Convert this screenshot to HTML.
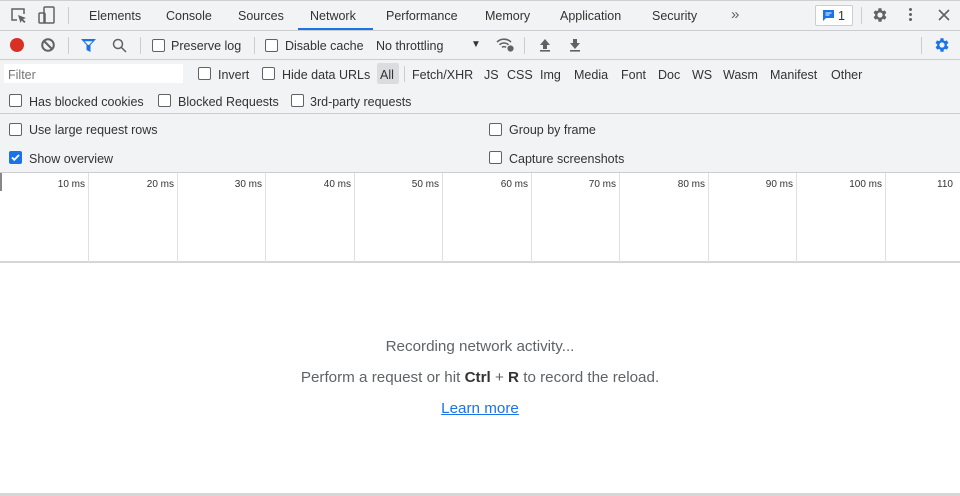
<!DOCTYPE html>
<html><head><style>
*{margin:0;padding:0;box-sizing:border-box}
body{width:960px;height:496px;overflow:hidden;background:#fff;font-family:"Liberation Sans",sans-serif;font-size:12.5px;color:#333;position:relative}
.a{position:absolute;white-space:nowrap}
.bar{position:absolute;left:0;width:960px;background:#f1f3f4}
.hl{position:absolute;left:0;width:960px;height:1px;background:#cbcdd1}
.vs{position:absolute;width:1px;background:#cbcdd1}
.cb{position:absolute;width:13px;height:13px;border:1px solid #5f6368;border-radius:2px;background:#fff}
.g{position:absolute;top:173px;height:89px;width:1px;background:#e0e0e0}
.ms{position:absolute;top:179px;font-size:10px;color:#333;text-align:right;width:60px}
.tx{margin-top:1px}
</style></head><body>
<div class="bar" style="top:0;height:172px"></div>
<div class="hl" style="top:0;background:#d0d0d0"></div>
<div class="hl" style="top:30px"></div>
<div class="hl" style="top:59px"></div>
<div class="hl" style="top:113px"></div>
<div class="hl" style="top:172px"></div>
<div class="hl" style="top:261px;height:2px;background:#d6d6d6"></div>
<div class="hl" style="top:493px;height:3px;background:#d6d6d6"></div>

<svg class="a" style="left:10px;top:7px" width="18" height="18" viewBox="0 0 18 18" fill="none" stroke="#5f6368" stroke-width="1.5"><path d="M7 13H2V2h12v5"/><path d="M8 8l8 3-3 1.2 2.5 2.5-1.3 1.3-2.5-2.5L10.5 16z" fill="#5f6368" stroke="none"/></svg>
<svg class="a" style="left:38px;top:6px" width="18" height="19" viewBox="0 0 18 19" fill="none" stroke="#5f6368" stroke-width="1.5"><rect x="6" y="1" width="10" height="16" rx="1"/><rect x="1" y="7" width="6" height="10" rx="1"/></svg>
<div class="vs" style="left:68px;top:7px;height:17px"></div>
<div class="a" style="left:89px;top:9px">Elements</div>
<div class="a" style="left:166px;top:9px">Console</div>
<div class="a" style="left:238px;top:9px">Sources</div>
<div class="a" style="left:310px;top:9px">Network</div>
<div class="a" style="left:298px;top:28px;width:75px;height:2px;background:#1a73e8"></div>
<div class="a" style="left:386px;top:9px">Performance</div>
<div class="a" style="left:485px;top:9px">Memory</div>
<div class="a" style="left:560px;top:9px">Application</div>
<div class="a" style="left:652px;top:9px">Security</div>
<div class="a" style="left:731px;top:6px;font-size:15px;color:#5f6368">»</div>
<div class="a" style="left:815px;top:5px;width:38px;height:21px;border:1px solid #cbcdd1;border-radius:2px;background:#fff"></div>
<svg class="a" style="left:822px;top:9px" width="13" height="13" viewBox="0 0 13 13"><path d="M1 1h11v8H4l-3 3z" fill="#1a73e8"/><path d="M3.5 4h6M3.5 6h4" stroke="#fff"/></svg>
<div class="a" style="left:838px;top:9px">1</div>
<div class="vs" style="left:861px;top:7px;height:17px"></div>
<svg class="a" style="left:871px;top:6px" width="18" height="18" viewBox="0 0 24 24"><path fill="#5f6368" d="M19.4 13a7.5 7.5 0 000-2l2.1-1.6-2-3.5-2.5 1a7 7 0 00-1.7-1L15 3h-4l-.4 2.9a7 7 0 00-1.7 1l-2.5-1-2 3.5L6.6 11a7.5 7.5 0 000 2l-2.1 1.6 2 3.5 2.5-1a7 7 0 001.7 1L11 21h4l.4-2.9a7 7 0 001.7-1l2.5 1 2-3.5zM13 15.5a3.5 3.5 0 110-7 3.5 3.5 0 010 7z" transform="translate(-1 0)"/></svg>
<div class="a" style="left:909px;top:8px;width:3px;height:3px;border-radius:2px;background:#5f6368;box-shadow:0 5px 0 #5f6368,0 10px 0 #5f6368"></div>
<svg class="a" style="left:938px;top:9px" width="12" height="12" viewBox="0 0 12 12" stroke="#5f6368" stroke-width="1.6"><path d="M1 1l10 10M11 1L1 11"/></svg>

<div class="a" style="left:10px;top:38px;width:14px;height:14px;border-radius:50%;background:#d93025"></div>
<svg class="a" style="left:41px;top:38px" width="14" height="14" viewBox="0 0 14 14" fill="none" stroke="#5f6368" stroke-width="2"><circle cx="7" cy="7" r="5.8"/><path d="M3 3l8 8"/></svg>
<div class="vs" style="left:68px;top:37px;height:17px"></div>
<svg class="a" style="left:81px;top:39px" width="15" height="13" viewBox="0 0 15 13"><path d="M0 0h15L9.5 6v7l-4-2V6z" fill="#1a73e8"/><path d="M3.5 2.3h8L8 6H7z" fill="#f1f3f4"/></svg>
<svg class="a" style="left:112px;top:38px" width="15" height="15" viewBox="0 0 15 15" fill="none" stroke="#5f6368" stroke-width="1.5"><circle cx="6" cy="6" r="4.5"/><path d="M9.3 9.3L14 14"/></svg>
<div class="vs" style="left:140px;top:37px;height:17px"></div>
<div class="cb" style="left:152px;top:39px"></div><div class="a" style="left:171px;top:39px">Preserve log</div>
<div class="vs" style="left:254px;top:37px;height:17px"></div>
<div class="cb" style="left:265px;top:39px"></div><div class="a" style="left:285px;top:39px">Disable cache</div>
<div class="a" style="left:376px;top:39px">No throttling</div>
<div class="a" style="left:471px;top:39px;font-size:10px;color:#333">▼</div>
<svg class="a" style="left:496px;top:37px" width="20" height="16" viewBox="0 0 20 16" fill="none" stroke="#5f6368" stroke-width="1.6"><path d="M1 5a10 10 0 0114 0M3.5 7.8a6.5 6.5 0 019 0M6 10.4a3 3 0 014 0"/><circle cx="14.5" cy="11.5" r="2.3" fill="#5f6368"/></svg>
<div class="vs" style="left:524px;top:37px;height:17px"></div>
<svg class="a" style="left:539px;top:38px" width="12" height="14" viewBox="0 0 12 14"><path d="M6 1L1 7h3v4h4V7h3z" fill="#5f6368"/><rect x="1" y="12" width="10" height="1.6" fill="#5f6368"/></svg>
<svg class="a" style="left:569px;top:38px" width="12" height="14" viewBox="0 0 12 14"><path d="M6 11L1 5h3V1h4v4h3z" fill="#5f6368"/><rect x="1" y="12" width="10" height="1.6" fill="#5f6368"/></svg>
<div class="vs" style="left:921px;top:37px;height:17px"></div>
<svg class="a" style="left:933px;top:36px" width="18" height="18" viewBox="0 0 24 24"><path fill="#1a73e8" d="M19.4 13a7.5 7.5 0 000-2l2.1-1.6-2-3.5-2.5 1a7 7 0 00-1.7-1L15 3h-4l-.4 2.9a7 7 0 00-1.7 1l-2.5-1-2 3.5L6.6 11a7.5 7.5 0 000 2l-2.1 1.6 2 3.5 2.5-1a7 7 0 001.7 1L11 21h4l.4-2.9a7 7 0 001.7-1l2.5 1 2-3.5zM13 15.5a3.5 3.5 0 110-7 3.5 3.5 0 010 7z" transform="translate(-1 0)"/></svg>

<div class="a" style="left:4px;top:64px;width:179px;height:19px;background:#fff"></div>
<div class="a" style="left:8px;top:68px;color:#757575">Filter</div>
<div class="cb" style="left:198px;top:67px"></div><div class="a" style="left:218px;top:68px">Invert</div>
<div class="cb" style="left:262px;top:67px"></div><div class="a" style="left:282px;top:68px">Hide data URLs</div>
<div class="a" style="left:377px;top:63px;width:22px;height:21px;background:#dadce0;border-radius:2px"></div>
<div class="a" style="left:380px;top:68px">All</div>
<div class="vs" style="left:404px;top:66px;height:16px"></div>
<div class="a" style="left:412px;top:68px">Fetch/XHR</div>
<div class="a" style="left:484px;top:68px">JS</div>
<div class="a" style="left:507px;top:68px">CSS</div>
<div class="a" style="left:540px;top:68px">Img</div>
<div class="a" style="left:574px;top:68px">Media</div>
<div class="a" style="left:621px;top:68px">Font</div>
<div class="a" style="left:658px;top:68px">Doc</div>
<div class="a" style="left:692px;top:68px">WS</div>
<div class="a" style="left:723px;top:68px">Wasm</div>
<div class="a" style="left:770px;top:68px">Manifest</div>
<div class="a" style="left:831px;top:68px">Other</div>
<div class="cb" style="left:9px;top:94px"></div><div class="a" style="left:29px;top:95px">Has blocked cookies</div>
<div class="cb" style="left:158px;top:94px"></div><div class="a" style="left:178px;top:95px">Blocked Requests</div>
<div class="cb" style="left:291px;top:94px"></div><div class="a" style="left:310px;top:95px">3rd-party requests</div>

<div class="cb" style="left:9px;top:123px"></div><div class="a" style="left:29px;top:123px">Use large request rows</div>
<div class="cb" style="left:9px;top:151px;background:#1a73e8;border-color:#1a73e8"></div>
<svg class="a" style="left:10px;top:152px" width="11" height="11" viewBox="0 0 11 11" fill="none" stroke="#fff" stroke-width="1.8"><path d="M2 5.5l2.3 2.3L9 3"/></svg>
<div class="a" style="left:29px;top:152px">Show overview</div>
<div class="cb" style="left:489px;top:123px"></div><div class="a" style="left:509px;top:123px">Group by frame</div>
<div class="cb" style="left:489px;top:151px"></div><div class="a" style="left:509px;top:152px">Capture screenshots</div>

<div class="a" style="left:0;top:173px;width:2px;height:18px;background:#888"></div>
<div class="g" style="left:88px"></div><div class="g" style="left:177px"></div><div class="g" style="left:265px"></div><div class="g" style="left:354px"></div><div class="g" style="left:442px"></div><div class="g" style="left:531px"></div><div class="g" style="left:619px"></div><div class="g" style="left:708px"></div><div class="g" style="left:796px"></div><div class="g" style="left:885px"></div>
<div class="ms" style="left:25px">10 ms</div><div class="ms" style="left:114px">20 ms</div><div class="ms" style="left:202px">30 ms</div><div class="ms" style="left:291px">40 ms</div><div class="ms" style="left:379px">50 ms</div><div class="ms" style="left:468px">60 ms</div><div class="ms" style="left:556px">70 ms</div><div class="ms" style="left:645px">80 ms</div><div class="ms" style="left:733px">90 ms</div><div class="ms" style="left:822px">100 ms</div>
<div class="a" style="left:937px;top:179px;font-size:10px">110</div>

<div class="a" style="left:0;width:960px;top:338px;text-align:center;color:#5f6368;font-size:15.2px">Recording network activity...</div>
<div class="a" style="left:0;width:960px;top:369px;text-align:center;color:#5f6368;font-size:15.2px">Perform a request or hit <b style="color:#333">Ctrl</b> + <b style="color:#333">R</b> to record the reload.</div>
<div class="a" style="left:0;width:960px;top:400px;text-align:center;color:#1a73e8;font-size:15.2px;text-decoration:underline">Learn more</div>
</body></html>
